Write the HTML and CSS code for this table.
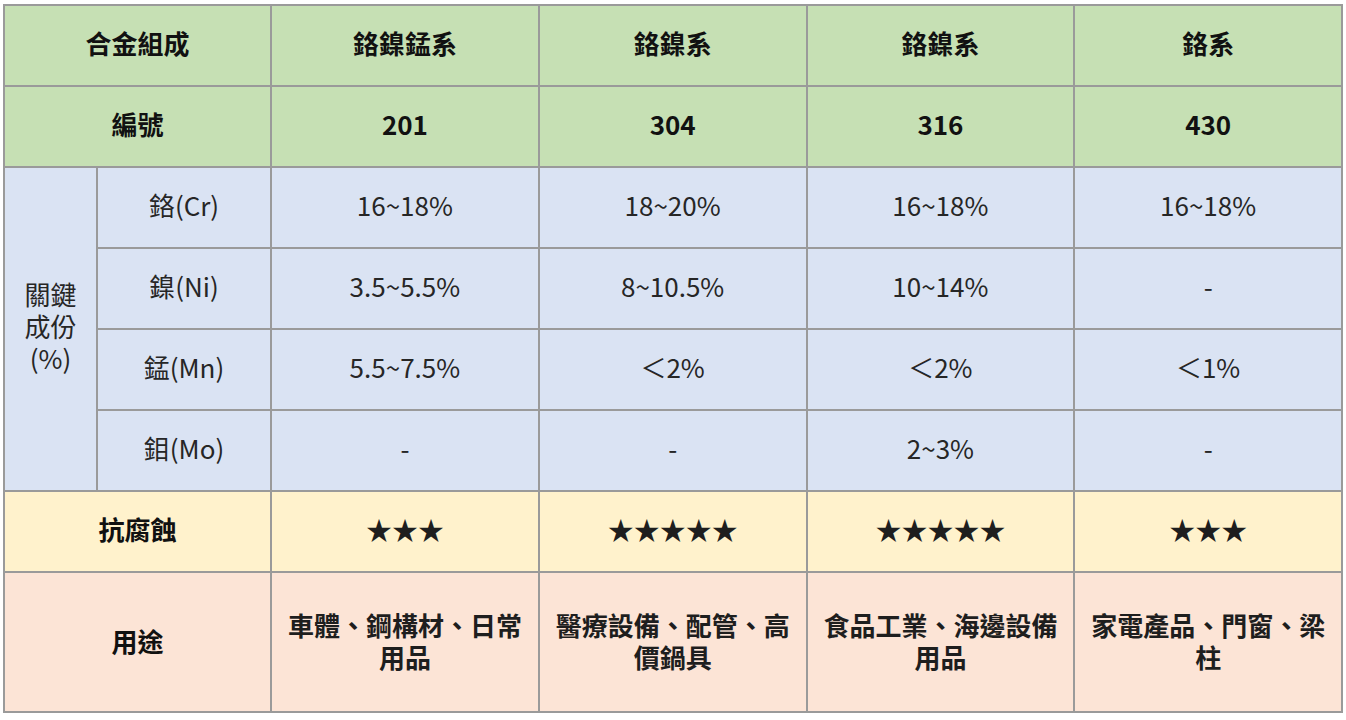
FILE: index.html
```html
<!DOCTYPE html>
<html lang="zh-Hant">
<head>
<meta charset="utf-8">
<title>不鏽鋼比較</title>
<link rel="stylesheet" href="styles.css">
</head>
<body>
<table class="grid">
  <colgroup>
    <col class="c-a"><col class="c-b"><col class="c-v"><col class="c-v"><col class="c-v"><col class="c-v">
  </colgroup>
  <tr class="head">
    <th colspan="2">合金組成</th>
    <th>鉻鎳錳系</th>
    <th>鉻鎳系</th>
    <th>鉻鎳系</th>
    <th>鉻系</th>
  </tr>
  <tr class="head">
    <th colspan="2">編號</th>
    <th>201</th>
    <th>304</th>
    <th>316</th>
    <th>430</th>
  </tr>
  <tr class="comp">
    <td rowspan="4" class="group">關鍵<br>成份<br>(%)</td>
    <td>鉻(Cr)</td>
    <td>16~18%</td>
    <td>18~20%</td>
    <td>16~18%</td>
    <td>16~18%</td>
  </tr>
  <tr class="comp">
    <td>鎳(Ni)</td>
    <td>3.5~5.5%</td>
    <td>8~10.5%</td>
    <td>10~14%</td>
    <td>-</td>
  </tr>
  <tr class="comp">
    <td>錳(Mn)</td>
    <td>5.5~7.5%</td>
    <td>＜2%</td>
    <td>＜2%</td>
    <td>＜1%</td>
  </tr>
  <tr class="comp">
    <td>鉬(Mo)</td>
    <td>-</td>
    <td>-</td>
    <td>2~3%</td>
    <td>-</td>
  </tr>
  <tr class="rate">
    <th colspan="2">抗腐蝕</th>
    <td>★★★</td>
    <td>★★★★★</td>
    <td>★★★★★</td>
    <td>★★★</td>
  </tr>
  <tr class="use">
    <th colspan="2">用途</th>
    <td>車體、鋼構材、日常用品</td>
    <td>醫療設備、配管、高價鍋具</td>
    <td>食品工業、海邊設備用品</td>
    <td>家電產品、門窗、梁柱</td>
  </tr>
</table>
</body>
</html>
```
FILE: styles.css
```css
html, body {
  margin: 0;
  padding: 0;
  background: #ffffff;
}
body {
  padding: 4px 0 0 3px;
  font-family: "Noto Sans CJK TC", "Noto Sans", sans-serif;
  font-size: 26px;
  line-height: 32px;
  color: #262626;
}
.grid {
  border-collapse: collapse;
  table-layout: fixed;
  width: 1338px;
}
.c-a { width: 93px; }
.c-b { width: 174px; }
.c-v { width: 267.75px; }
.grid th,
.grid td {
  border: 2px solid #9a9a9a;
  padding: 0 6px 6px;
  text-align: center;
  vertical-align: middle;
  box-sizing: border-box;
}
.grid th {
  font-weight: 700;
  color: #111111;
}
.head th { background: #c6e0b4; height: 81px; }
.comp td { background: #dae3f3; height: 81px; }
.group { padding: 0 0 6px; }
.rate th, .rate td { background: #fff2cc; height: 81px; }
.rate td { color: #1e1e1e; }
.use th, .use td { background: #fce4d6; height: 140px; padding-bottom: 2px; }
.use td { font-weight: 700; color: #1e1e1e; }
```
